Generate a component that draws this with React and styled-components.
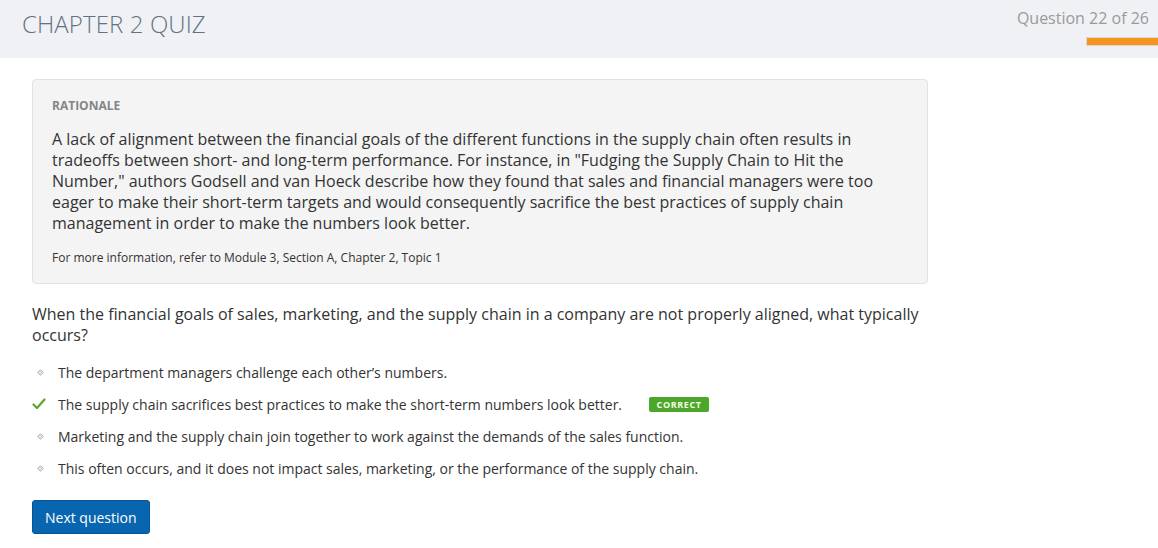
import React from 'react';
import styled, { createGlobalStyle } from 'styled-components';

const GlobalStyle = createGlobalStyle`
    body {
        margin: 0;
        background: #fff;
        font-family: 'Open Sans', 'Noto Sans', sans-serif;
        color: #333;
    }
`;

const Header = styled.header`
    height: 58px;
    background: #f0f1f5;
    display: flex;
    justify-content: space-between;
    align-items: flex-start;
`;

const Title = styled.h1`
    margin: 9px 0 0 22px;
    font-size: 24px;
    line-height: 30px;
    font-weight: 300;
    color: #627282;
    letter-spacing: 0.1px;
`;

const Progress = styled.div`
    display: flex;
    flex-direction: column;
    align-items: flex-end;
    padding-top: 8px;
`;

const ProgressLabel = styled.div`
    font-size: 16px;
    line-height: 20px;
    color: #9a9a9a;
    margin-right: 9px;
`;

const ProgressBar = styled.div`
    margin-top: 9px;
    width: 71px;
    height: 7px;
    background: #f7941d;
    border: 1px solid #d8d8d8;
    border-right: none;
`;

const Main = styled.main`
    width: 896px;
    margin: 21px 0 0 32px;
`;

const Rationale = styled.section`
    background: #f4f4f4;
    border: 1px solid #e2e2e2;
    border-radius: 4px;
    padding: 18px 19px 17px;
`;

const RationaleLabel = styled.div`
    font-size: 12px;
    line-height: 16px;
    font-weight: 700;
    color: #858585;
`;

const RationaleText = styled.p`
    margin: 15px 0 0;
    font-size: 16px;
    line-height: 21px;
    color: #333;
`;

const RationaleRef = styled.p`
    margin: 16px 0 0;
    font-size: 12px;
    line-height: 16px;
    color: #333;
`;

const Question = styled.p`
    margin: 20px 0 0;
    font-size: 16px;
    line-height: 21px;
    color: #333;
`;

const Options = styled.ul`
    list-style: none;
    margin: 16px 0 0;
    padding: 0;
    display: flex;
    flex-direction: column;
    gap: 12px;
`;

const Option = styled.li`
    display: flex;
    align-items: center;
    height: 20px;
    font-size: 14px;
    color: #333;
`;

const Marker = styled.span`
    width: 26px;
    display: flex;
    align-items: center;
    padding-left: ${p => (p.$check ? '0' : '5px')};
    box-sizing: border-box;
`;

const Badge = styled.span`
    margin-left: 27px;
    height: 15px;
    width: 60px;
    display: inline-flex;
    align-items: center;
    justify-content: center;
    background: #4aa72a;
    border-radius: 2px;
    color: #fafae8;
    font-size: 9px;
    font-weight: 700;
    letter-spacing: 0.6px;
`;

const NextButton = styled.button`
    margin-top: 22px;
    height: 34px;
    padding: 0 12px;
    background: #0866b0;
    border: 1px solid #075594;
    border-radius: 3px;
    color: #fff;
    font-family: 'Open Sans', 'Noto Sans', sans-serif;
    font-size: 14px;
    cursor: pointer;
`;

const Diamond = () => (
    <svg width="7" height="7" viewBox="0 0 7 7">
        <path d="M3.5 0.7 L6.3 3.5 L3.5 6.3 L0.7 3.5 Z" fill="#e2e2e2" stroke="#b3b3b3" strokeWidth="1" />
    </svg>
);

const Check = () => (
    <svg width="14" height="12" viewBox="0 0 14 12">
        <path d="M1.5 6.5 L5 10 L12.5 1.5" fill="none" stroke="#5fa32f" strokeWidth="2.2" strokeLinecap="round" strokeLinejoin="round" />
    </svg>
);

const answers = [
    { text: 'The department managers challenge each other’s numbers.' },
    { text: 'The supply chain sacrifices best practices to make the short-term numbers look better.', correct: true },
    { text: 'Marketing and the supply chain join together to work against the demands of the sales function.' },
    { text: 'This often occurs, and it does not impact sales, marketing, or the performance of the supply chain.' },
];

const App = () => (
    <>
        <GlobalStyle />
        <Header>
            <Title>CHAPTER 2 QUIZ</Title>
            <Progress>
                <ProgressLabel>Question 22 of 26</ProgressLabel>
                <ProgressBar />
            </Progress>
        </Header>
        <Main>
            <Rationale>
                <RationaleLabel>RATIONALE</RationaleLabel>
                <RationaleText>
                    A lack of alignment between the financial goals of the different functions in the supply chain often results in
                    tradeoffs between short- and long-term performance. For instance, in "Fudging the Supply Chain to Hit the
                    Number," authors Godsell and van Hoeck describe how they found that sales and financial managers were too
                    eager to make their short-term targets and would consequently sacrifice the best practices of supply chain
                    management in order to make the numbers look better.
                </RationaleText>
                <RationaleRef>For more information, refer to Module 3, Section A, Chapter 2, Topic 1</RationaleRef>
            </Rationale>
            <Question>
                When the financial goals of sales, marketing, and the supply chain in a company are not properly aligned, what typically
                occurs?
            </Question>
            <Options>
                {answers.map(a => (
                    <Option key={a.text}>
                        <Marker $check={a.correct}>{a.correct ? <Check /> : <Diamond />}</Marker>
                        {a.text}
                        {a.correct && <Badge>CORRECT</Badge>}
                    </Option>
                ))}
            </Options>
            <NextButton>Next question</NextButton>
        </Main>
    </>
);

export default App;
